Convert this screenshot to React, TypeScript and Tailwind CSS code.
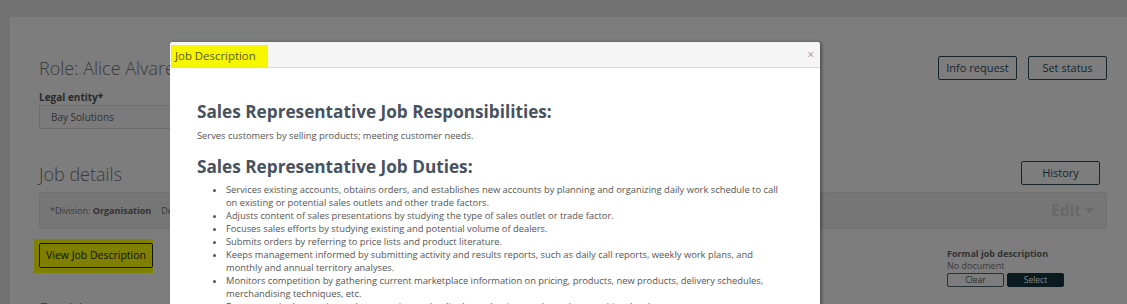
import React from "react";

const F = { fontFamily: '"Open Sans", "Liberation Sans", sans-serif' };

function OutlineBtn({ children, className = "" }: { children: React.ReactNode; className?: string }) {
  return (
    <div className={`flex items-center justify-center border rounded-[2px] ${className}`}>
      {children}
    </div>
  );
}

export default function App() {
  return (
    <div className="relative w-[1127px] h-[304px] overflow-hidden" style={F}>
      {/* Background page */}
      <div className="h-full bg-[#e4e4e4] pt-[17px] pl-[10px]">
        <div className="h-full bg-[#fafafa] pl-[29px] pr-[20px] pt-[39px]">
          <div className="flex items-start justify-between">
            <div className="text-[18px] font-light text-[#777] leading-[24px]">Role: Alice Alvarez</div>
            <div className="flex gap-[11px]">
              <OutlineBtn className="w-[79px] h-[24px] border-[#2f4a55] text-[#33505c] text-[11px]">Info request</OutlineBtn>
              <OutlineBtn className="w-[79px] h-[24px] border-[#2f4a55] text-[#33505c] text-[11px]">Set status</OutlineBtn>
            </div>
          </div>
          <div className="mt-[10px] text-[10px] font-bold text-[#555] leading-[14px]">Legal entity*</div>
          <div className="mt-[1px] w-[330px] h-[24px] border border-[#d6d6d6] bg-[#f7f7f7] flex items-center pl-[11px] text-[10px] text-[#666]">
            Bay Solutions
          </div>
          <div className="mt-[33px] flex items-center justify-between pr-[7px]">
            <div className="text-[18px] font-light text-[#777] leading-[24px]">Job details</div>
            <OutlineBtn className="w-[79px] h-[24px] -mt-[2px] border-[#2f4a55] text-[#33505c] text-[11px]">History</OutlineBtn>
          </div>
          <div className="mt-[6px] h-[37px] bg-[#ececec] border border-[#e2e2e2] rounded-[3px] flex items-center justify-between pl-[10px] pr-[12px]">
            <div className="text-[9px] text-[#777]">
              *Division: <span className="font-bold text-[#666]">Organisation</span>
              <span className="ml-[10px]">Department</span>
            </div>
            <div className="text-[15.5px] font-bold text-[#d2d2d2] flex items-center gap-[4px]">
              Edit
              <svg width="9" height="6" viewBox="0 0 9 6"><path d="M0 0h9L4.5 5.5z" fill="#d2d2d2" /></svg>
            </div>
          </div>
          <div className="mt-[10px] flex justify-between">
            <div className="bg-[#ffff00] p-[4px] pr-[0px] -ml-[5px] h-[34px]">
              <OutlineBtn className="w-[114px] h-[25px] ml-[1px] border-[#1e2a10] text-[#1e2a10] text-[10.5px]">View Job Description</OutlineBtn>
            </div>
            <div className="w-[160px] pt-[9px]">
              <div className="text-[9px] font-bold text-[#666] leading-[12px]">Formal job description</div>
              <div className="text-[9px] text-[#777] leading-[12px]">No document</div>
              <div className="flex gap-[3px] mt-[1px]">
                <OutlineBtn className="w-[57px] h-[14px] text-[8.5px] border-[#4a6470] text-[#555]">Clear</OutlineBtn>
                <div className="w-[57px] h-[14px] bg-[#143640] text-white text-[8.5px] flex items-center justify-center rounded-[2px]">Select</div>
              </div>
            </div>
          </div>
          <div className="mt-[10px] text-[18px] font-light text-[#777] leading-[24px]">Position management</div>
        </div>
      </div>

      {/* Overlay */}
      <div className="absolute inset-0 bg-black/50" />

      {/* Modal */}
      <div className="absolute left-[170px] top-[42px] w-[650px] h-[300px] bg-white rounded-t-[3px] shadow-[2px_0_3px_rgba(0,0,0,0.35)]">
        <div className="h-[26px] bg-[#f5f5f5] border-b border-[#d9d9d9] flex items-center justify-between rounded-t-[3px]">
          <div className="h-[22px] ml-[1px] mt-[2px] pl-[4px] pr-[12px] bg-[#f6f600] text-[11.4px] text-[#5a5a10] leading-[22px]">Job Description</div>
          <div className="mr-[6px] text-[12px] text-[#9a9a9a] leading-none">×</div>
        </div>
        <div className="pl-[27px] pr-[20px] pt-[33px] text-[#555]">
          <div className="text-[17.2px] font-bold text-[#47525e] leading-[22px]">Sales Representative Job Responsibilities:</div>
          <div className="mt-[6px] text-[9.35px] leading-[13px]">Serves customers by selling products; meeting customer needs.</div>
          <div className="mt-[14px] text-[17.2px] font-bold text-[#47525e] leading-[22px]">Sales Representative Job Duties:</div>
          <ul className="mt-[5px] list-disc pl-[29px] text-[9.35px] leading-[13px] text-[#555]">
            <li>Services existing accounts, obtains orders, and establishes new accounts by planning and organizing daily work schedule to call<br />on existing or potential sales outlets and other trade factors.</li>
            <li>Adjusts content of sales presentations by studying the type of sales outlet or trade factor.</li>
            <li>Focuses sales efforts by studying existing and potential volume of dealers.</li>
            <li>Submits orders by referring to price lists and product literature.</li>
            <li>Keeps management informed by submitting activity and results reports, such as daily call reports, weekly work plans, and<br />monthly and annual territory analyses.</li>
            <li>Monitors competition by gathering current marketplace information on pricing, products, new products, delivery schedules,<br />merchandising techniques, etc.</li>
            <li>Recommends changes in products, service, and policy by evaluating results and competitive developments.</li>
          </ul>
        </div>
      </div>
    </div>
  );
}
